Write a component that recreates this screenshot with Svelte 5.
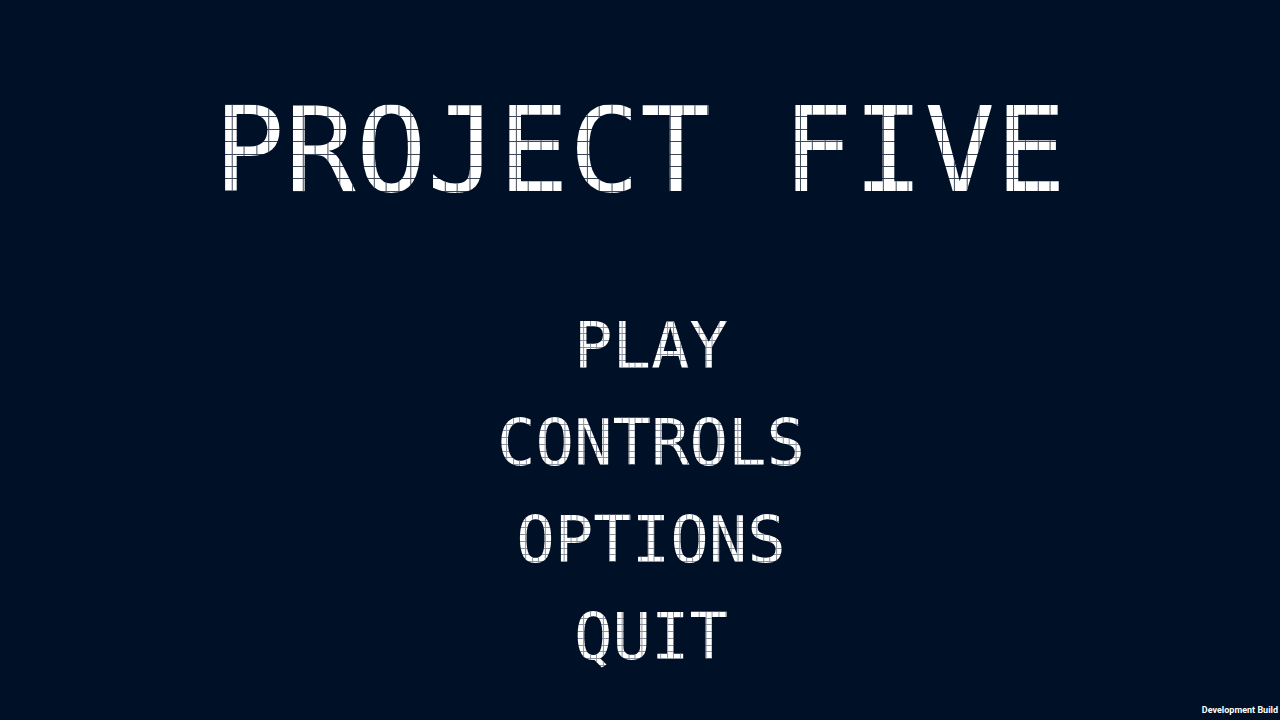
<script>
	const title = 'PROJECT FIVE';
	const items = ['PLAY', 'CONTROLS', 'OPTIONS', 'QUIT'];
</script>

<svelte:head>
	<title>Project Five</title>
</svelte:head>

<main>
	<h1 class="dots">{title}</h1>

	<nav aria-label="Main menu">
		{#each items as item}
			<button type="button" class="dots">{item}</button>
		{/each}
	</nav>

	<p class="build">Development Build</p>
</main>

<style>
	:global(body) {
		background: #001127;
	}

	main {
		display: flex;
		flex-direction: column;
		align-items: center;
		min-height: 100vh;
		box-sizing: border-box;
		padding-top: 82px;
		color: #fff;
		font-family: 'DejaVu Sans Mono', monospace;
		position: relative;
	}

	/* letters are filled with a grid of square dots, one tile per character */
	.dots {
		--dot: 0.105em;
		background-image:
			repeating-linear-gradient(to right, transparent 0 calc(var(--dot) - 1px), var(--seam) calc(var(--dot) - 1px) var(--dot)),
			repeating-linear-gradient(to bottom, #fff 0 calc(var(--dot) - 1px), var(--seam) calc(var(--dot) - 1px) var(--dot));
		background-size: 1ch 100%, 100% 100%;
		background-position: 0.05em 0, 0 23px;
		-webkit-background-clip: text;
		background-clip: text;
		color: transparent;
	}

	h1 {
		--seam: #3c4859;
		margin: 0;
		font-size: 118px;
		font-weight: 400;
		line-height: 136px;
		white-space: pre;
	}

	nav {
		display: flex;
		flex-direction: column;
		align-items: center;
		margin-top: 80px;
		padding-left: 22px;
	}

	button {
		--seam: #8d949e;
		border: 0;
		padding: 0;
		background: none;
		font: inherit;
		font-size: 64px;
		line-height: 97px;
		cursor: pointer;
	}

	.build {
		position: absolute;
		right: 2px;
		bottom: 4px;
		margin: 0;
		font: 700 9px/12px Roboto, sans-serif;
	}
</style>
